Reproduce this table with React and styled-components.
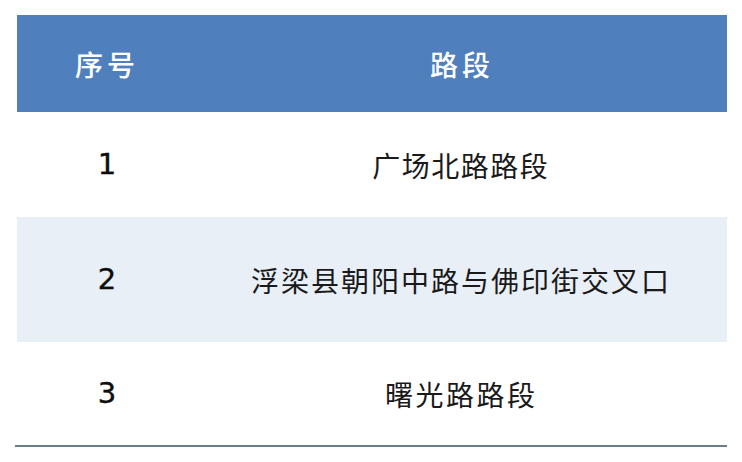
import React from "react";
import styled, { createGlobalStyle } from "styled-components";

const GlobalStyle = createGlobalStyle`
  body {
    margin: 0;
    background: #ffffff;
  }
`;

const rows = [
  { no: "1", name: "广场北路路段", height: 105, shade: false, spacing: 1.5 },
  { no: "2", name: "浮梁县朝阳中路与佛印街交叉口", height: 125, shade: true, spacing: 2 },
  { no: "3", name: "曙光路路段", height: 103, shade: false, spacing: 2.5 },
];

const App = () => {
  return (
    <>
      <GlobalStyle />
      <Page>
        <Table>
          <HeadRow>
            <HeadCell>序号</HeadCell>
            <HeadCell>路段</HeadCell>
          </HeadRow>
          {rows.map((r) => (
            <Row key={r.no} $height={r.height} $shade={r.shade}>
              <NumCell>{r.no}</NumCell>
              <NameCell $spacing={r.spacing}>{r.name}</NameCell>
            </Row>
          ))}
          <BottomRule />
        </Table>
      </Page>
    </>
  );
};

const Page = styled.div`
  padding: 15px 15px 0 17px;
`;

const Table = styled.div`
  width: 710px;
  display: flex;
  flex-direction: column;
`;

const HeadRow = styled.div`
  display: grid;
  grid-template-columns: 176px 1fr;
  height: 97px;
  background: #4f80bd;
  align-items: center;
`;

const HeadCell = styled.div`
  text-align: center;
  color: #ffffff;
  font-family: "Noto Sans CJK SC", sans-serif;
  font-size: 28px;
  font-weight: 500;
  letter-spacing: 4px;
  text-indent: 4px;
  line-height: 1;
`;

const Row = styled.div`
  display: grid;
  grid-template-columns: 176px 1fr;
  align-items: center;
  height: ${(p) => p.$height}px;
  background: ${(p) => (p.$shade ? "#e9eff6" : "#ffffff")};
`;

const NumCell = styled.div`
  text-align: center;
  color: #0d0d0d;
  font-family: "DejaVu Sans", "Liberation Sans", sans-serif;
  font-size: 29px;
  line-height: 1;
  padding-left: 4px;
  -webkit-text-stroke: 0.4px #0d0d0d;
`;

const NameCell = styled.div`
  text-align: center;
  color: #1a1a1a;
  font-family: "Noto Sans CJK SC", sans-serif;
  font-size: 28px;
  font-weight: 400;
  line-height: 1;
  letter-spacing: ${(p) => p.$spacing}px;
  text-indent: ${(p) => p.$spacing}px;
`;

const BottomRule = styled.div`
  height: 2px;
  margin-left: -2px;
  background: #687e8e;
`;

export default App;
